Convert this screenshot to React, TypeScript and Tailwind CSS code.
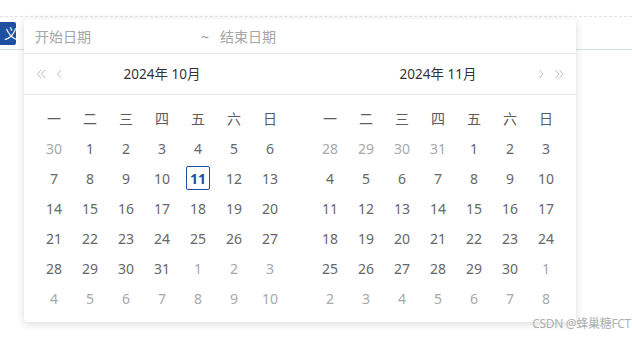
import React from 'react'

const weekdays = ['一', '二', '三', '四', '五', '六', '日']

type Day = { n: number; muted?: boolean; today?: boolean }

function buildMonth(prevTail: number[], count: number, nextHead: number, today?: number): Day[] {
  const days: Day[] = prevTail.map((n) => ({ n, muted: true }))
  for (let i = 1; i <= count; i++) days.push({ n: i, today: i === today })
  let i = 1
  while (days.length < 42 && i <= nextHead) days.push({ n: i++, muted: true })
  return days
}

const october = buildMonth([30], 31, 10, 11)
const november = buildMonth([28, 29, 30, 31], 30, 8)

function Chevron({ dir, double }: { dir: 'left' | 'right'; double?: boolean }) {
  const one = dir === 'left' ? 'M5 1 L1.5 5 L5 9' : 'M1.5 1 L5 5 L1.5 9'
  const two = dir === 'left' ? 'M9 1 L5.5 5 L9 9' : 'M5.5 1 L9 5 L5.5 9'
  return (
    <svg width={double ? 11 : 7} height="10" viewBox={double ? '0 0 11 10' : '0 0 7 10'} fill="none">
      <path d={one} stroke="#bdbdbd" strokeWidth="1" />
      {double && <path d={two} stroke="#bdbdbd" strokeWidth="1" />}
    </svg>
  )
}

function MonthPanel({ title, days, side }: { title: string; days: Day[]; side: 'left' | 'right' }) {
  return (
    <div className="w-[276px]">
      <div className="h-[41px] border-b border-[#e8e8e8] flex items-center relative">
        {side === 'left' && (
          <div className="absolute left-[12px] top-[15px] flex items-center gap-[9px]">
            <Chevron dir="left" double />
            <Chevron dir="left" />
          </div>
        )}
        <div className="w-full text-center text-[13.5px] text-[#333]">{title}</div>
        {side === 'right' && (
          <div className="absolute right-[11px] top-[15px] flex items-center gap-[9px]">
            <Chevron dir="right" />
            <Chevron dir="right" double />
          </div>
        )}
      </div>
      <div className="px-[12px] pt-[8px] grid grid-cols-7">
        {weekdays.map((w) => (
          <div key={w} className="h-[30px] flex items-center justify-center text-[14px] text-[#5c5c5c]">
            {w}
          </div>
        ))}
        {days.map((d, i) => (
          <div key={i} className="h-[30px] flex items-center justify-center">
            {d.today ? (
              <span className="w-[24px] h-[24px] flex items-center justify-center border border-[#1e4fa0] rounded-[2px] text-[#1e4fa0] font-bold text-[14px]">
                {d.n}
              </span>
            ) : (
              <span className={`text-[14px] ${d.muted ? 'text-[#a8a8a8]' : 'text-[#666]'}`}>{d.n}</span>
            )}
          </div>
        ))}
      </div>
    </div>
  )
}

export default function App() {
  return (
    <div
      className="relative w-[632px] h-[337px] bg-white overflow-hidden"
      style={{ fontFamily: '"Noto Sans", "Noto Sans CJK SC", sans-serif' }}
    >
      {/* page underneath */}
      <div className="pt-[16px]">
        <div className="border-t border-dashed border-[#e3e3e3]" />
        <div className="h-[33px] border-b border-[#d7dfea] flex items-start pt-[5px]">
          <div className="w-[16px] h-[23px] bg-[#1e4fa0] rounded-r-[2px] flex items-center justify-end overflow-hidden">
            <span className="text-white text-[14px] -mr-[2px]">义</span>
          </div>
        </div>
      </div>

      {/* range picker dropdown */}
      <div className="absolute left-[24px] top-[19px] w-[552px] h-[303px] bg-white rounded-[4px] shadow-[0_2px_8px_rgba(0,0,0,0.15)]">
        <div className="h-[35px] border-b border-[#e8e8e8] flex items-center text-[14px] text-[#a6a6a6]">
          <div className="pl-[11px] w-[166px]">开始日期</div>
          <div className="w-[30px] text-center text-[#999]">~</div>
          <div>结束日期</div>
        </div>
        <div className="flex">
          <MonthPanel title="2024年 10月" days={october} side="left" />
          <MonthPanel title="2024年 11月" days={november} side="right" />
        </div>
      </div>

      <div className="absolute right-[1px] bottom-[4px] text-[12px] text-[#b0b0b0] tracking-[-0.3px]">
        CSDN @蜂巢糖FCT
      </div>
    </div>
  )
}
